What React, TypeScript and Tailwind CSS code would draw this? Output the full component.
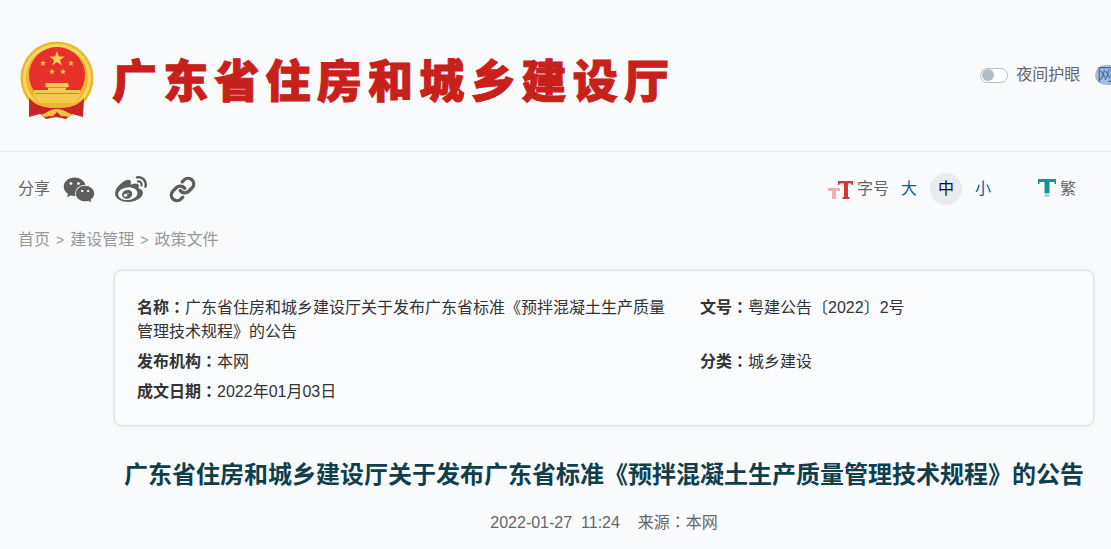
import { FaWeibo, FaWeixin } from "react-icons/fa";
import { Link } from "lucide-react";

const star = "#f5cf52";

const Emblem = () => (
  <svg width="76" height="80" viewBox="19 42 76 80" className="shrink-0">
    <circle cx="57" cy="79" r="36.5" fill="#edb62f" />
    <circle cx="57" cy="79" r="32.5" fill="none" stroke="#f8d565" strokeWidth="3" />
    <circle cx="57" cy="76" r="28" fill="#e8302a" />
    <path d="M57 52l2 5.500h5.600l-4.600 3.400 1.800 5.600-4.800-3.400-4.800 3.400 1.800-5.600-4.600-3.400H55z" fill={star} />
    <path d="M43 61l.8 2.200h2.300l-1.900 1.400.7 2.300-1.900-1.400-1.900 1.400.7-2.300-1.900-1.400h2.300z" fill={star} />
    <path d="M71 61l.8 2.200h2.300l-1.900 1.400.7 2.300-1.900-1.400-1.900 1.400.7-2.300-1.900-1.400h2.300z" fill={star} />
    <path d="M52 69.500l.8 2.200h2.300l-1.900 1.400.7 2.300-1.900-1.400-1.900 1.400.7-2.300-1.900-1.400h2.300z" fill={star} />
    <path d="M63 69.500l.8 2.200h2.300l-1.900 1.400.7 2.300-1.900-1.400-1.900 1.400.7-2.300-1.900-1.400h2.300z" fill={star} />
    <path d="M46 84h22l1 4h-3v3h14v7l-6 6H40l-6-6v-7h14v-3h-3z" fill="#f3c94e" />
    <path d="M47 88h20v1H47zM35 94h44v1H35z" fill="#c98f1f" />
    <path d="M29 99c7 8 17 10 28 10s21-2 27-10l-1 19-11-3-6 5-10-2-10 2-6-5-11 3z" fill="#c9242a" />
    <path d="M31 99c6 6 15 8 26 8s20-2 26-8v1.500c-6 6-15 8.500-26 8.500s-20-2.500-26-8.500z" fill="#eab52c" />
    <path d="M40 116c5-1 10-6 17-6s12 5 17 6l-5 2-5-1-7 1.500-7-1.500-5 1z" fill="#f0c23f" />
    <path d="M52 118h10l-5-5z" fill="#c9242a" />
  </svg>
);

const SizeIcon = () => (
  <svg width="25" height="18" viewBox="0 0 25 18" className="shrink-0">
    <path d="M0 7h12v3H8v8H4v-8H0z" fill="#eeb1ae" />
    <path d="M10 0h15v4h-1.500V2.500H20V16h1.500v2h-7v-2H16V2.500h-4.500V4H10z" fill="#d8353b" />
  </svg>
);

const TradIcon = () => (
  <svg width="18" height="18" viewBox="0 0 18 18" className="shrink-0">
    <path d="M0 0h18v5h-1.500V3H11.500v11h-5V3H1.500v2H0z" fill="#12939b" />
    <path d="M6.500 14h5v4h-5z" fill="#a8d9dc" />
  </svg>
);

const Row = ({ label, value, className }: { label: string; value: string; className?: string }) => (
  <p className={`leading-[24px] ${className ?? ""}`}>
    <b className="font-bold">{label}</b>
    <b className="font-bold font-['Noto_Sans_CJK_TC'] leading-none">：</b>
    {value}
  </p>
);

export default function App() {
  return (
    <div className="h-[549px] w-[1111px] overflow-hidden bg-[#f9fafc] font-['Liberation_Sans','Noto_Sans_CJK_SC',sans-serif] text-[16px] text-[#333]">
      <header className="flex h-[152px] items-center border-b border-[#e9ebee] pl-[19px] pb-[3px]">
        <div className="mt-[14px] flex items-center">
          <Emblem />
          <h1 className="mt-[2px] ml-[17px] whitespace-nowrap text-[45px] leading-none font-black tracking-[6.200px] text-[#c8201a] [-webkit-text-stroke:1px_#c8201a]">
            广东省住房和城乡建设厅
          </h1>
        </div>
        <div className="mt-[2px] ml-[305px] flex shrink-0 items-center">
          <span className="flex h-[15px] w-[28px] items-center rounded-full border border-[#b8c0c8] bg-white pl-px">
            <span className="h-[12px] w-[12px] rounded-full bg-[#b4bcc5]" />
          </span>
          <span className="ml-2 whitespace-nowrap text-[#666]">夜间护眼</span>
          <span className="ml-[15px] flex h-[20px] w-[40px] shrink-0 items-center rounded-full bg-[#a0bfe3] pl-[2px] text-[#3f6ba8]">
            网
          </span>
        </div>
      </header>

      <div className="flex h-[74px] items-center pl-[18px] pt-[1px]">
        <span className="pb-[2px] text-[#666]">分享</span>
        <FaWeixin className="ml-[13px] text-[#5e5e5e]" size={32} />
        <FaWeibo className="ml-[20px] text-[#5e5e5e]" size={32} />
        <Link className="ml-[22px] text-[#5e5e5e]" size={27} strokeWidth={3} />
        <div className="ml-[632px] flex items-center">
          <SizeIcon />
          <span className="ml-[4px] pb-[2px] text-[#666]">字号</span>
          <span className="ml-3 pb-[2px] text-[#0e5a9c]">大</span>
          <span className="ml-[13px] mb-[2px] flex h-8 w-8 items-center justify-center rounded-full bg-[#e9ebee] text-[#111]">中</span>
          <span className="ml-[13px] pb-[2px] text-[#0e5a9c]">小</span>
          <span className="ml-[47px] pb-[3px]"><TradIcon /></span>
          <span className="ml-[4px] pb-[2px] text-[#666]">繁</span>
        </div>
      </div>

      <nav className="mt-px flex h-[26px] items-center pl-[18px] text-[#999]">
        首页
        <span className="mx-[6px] text-[14px]">&gt;</span>
        建设管理
        <span className="mx-[6px] text-[14px]">&gt;</span>
        政策文件
      </nav>

      <main className="mt-[17px] mr-[17px] ml-[114px]">
        <section className="grid grid-cols-[563px_1fr] gap-y-[6px] rounded-lg border border-[#dfe1e5] bg-[#fafbfd] px-[22px] pt-[25px] pb-[21px] shadow-[0_0_4px_rgba(0,0,0,0.08)]">
          <Row className="pr-[34px]" label="名称" value="广东省住房和城乡建设厅关于发布广东省标准《预拌混凝土生产质量管理技术规程》的公告" />
          <Row label="文号" value="粤建公告〔2022〕2号" />
          <Row label="发布机构" value="本网" />
          <Row label="分类" value="城乡建设" />
          <Row label="成文日期" value="2022年01月03日" />
        </section>
        <h2 className="mt-[21px] text-center text-[24px] leading-[56px] font-bold whitespace-nowrap text-[#0f3f4d]">
          广东省住房和城乡建设厅关于发布广东省标准《预拌混凝土生产质量管理技术规程》的公告
        </h2>
        <p className="mt-[8px] text-center leading-[24px] whitespace-pre text-[#666]">
          2022-01-27{"  "}11:24{"    "}来源<span className="font-['Noto_Sans_CJK_TC'] leading-none">：</span>本网
        </p>
      </main>
    </div>
  );
}
